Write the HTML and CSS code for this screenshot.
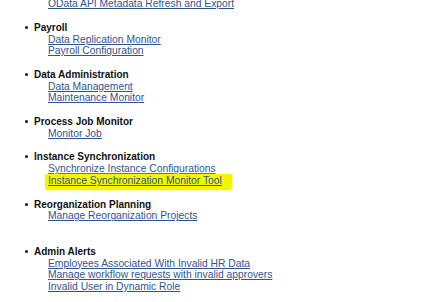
FILE: index.html
```
<!DOCTYPE html>
<html lang="en">
<head>
    <meta charset="UTF-8">
    <title>Admin Tools</title>
    <link rel="stylesheet" href="styles.css">
</head>
<body>

    <ul class="tools">
        <li class="group">
            <div class="links">
                <a href="#">OData API Metadata Refresh and Export</a>
            </div>
        </li>
        <li class="group">
            <span class="title">Payroll</span>
            <div class="links">
                <a href="#">Data Replication Monitor</a><br>
                <a href="#">Payroll Configuration</a>
            </div>
        </li>
        <li class="group">
            <span class="title">Data Administration</span>
            <div class="links">
                <a href="#">Data Management</a><br>
                <a href="#">Maintenance Monitor</a>
            </div>
        </li>
        <li class="group">
            <span class="title">Process Job Monitor</span>
            <div class="links">
                <a href="#">Monitor Job</a>
            </div>
        </li>
        <li class="group">
            <span class="title">Instance Synchronization</span>
            <div class="links">
                <a href="#">Synchronize Instance Configurations</a><br>
                <a href="#" class="marked">Instance Synchronization Monitor Tool</a>
            </div>
        </li>
        <li class="group wide">
            <span class="title">Reorganization Planning</span>
            <div class="links">
                <a href="#">Manage Reorganization Projects</a>
            </div>
        </li>
        <li class="group">
            <span class="title">Admin Alerts</span>
            <div class="links">
                <a href="#">Employees Associated With Invalid HR Data</a><br>
                <a href="#">Manage workflow requests with invalid approvers</a><br>
                <a href="#">Invalid User in Dynamic Role</a>
            </div>
        </li>
    </ul>

</body>
</html>
```

FILE: styles.css
```
body {
    margin: 0;
    background: #fff;
    font-family: "Liberation Sans", Arial, sans-serif;
    font-size: 10.3px;
    line-height: 11.8px;
    color: #111;
    overflow: hidden;
}
.tools {
    margin: -1.9px 0 0 0;
    padding-left: 34px;
    list-style: none;
}
.group {
    margin-bottom: 11.8px;
}
.group.wide {
    margin-bottom: 23.6px;
}
.title {
    font-weight: bold;
    font-size: 10px;
}
.title::before {
    content: "";
    display: inline-block;
    width: 3px;
    height: 3px;
    border-radius: 50%;
    background: #111;
    margin-left: -9px;
    margin-right: 6px;
    vertical-align: 2px;
}
.links {
    padding-left: 14px;
}
.links a {
    color: #2f5590;
    text-decoration: underline;
}
.marked {
    background: #f4f500;
    padding: 1px 10px 4px 3px;
    margin-left: -3px;
    border-radius: 2px;
    box-shadow: 0 0 2px #f4f500;
}
```
